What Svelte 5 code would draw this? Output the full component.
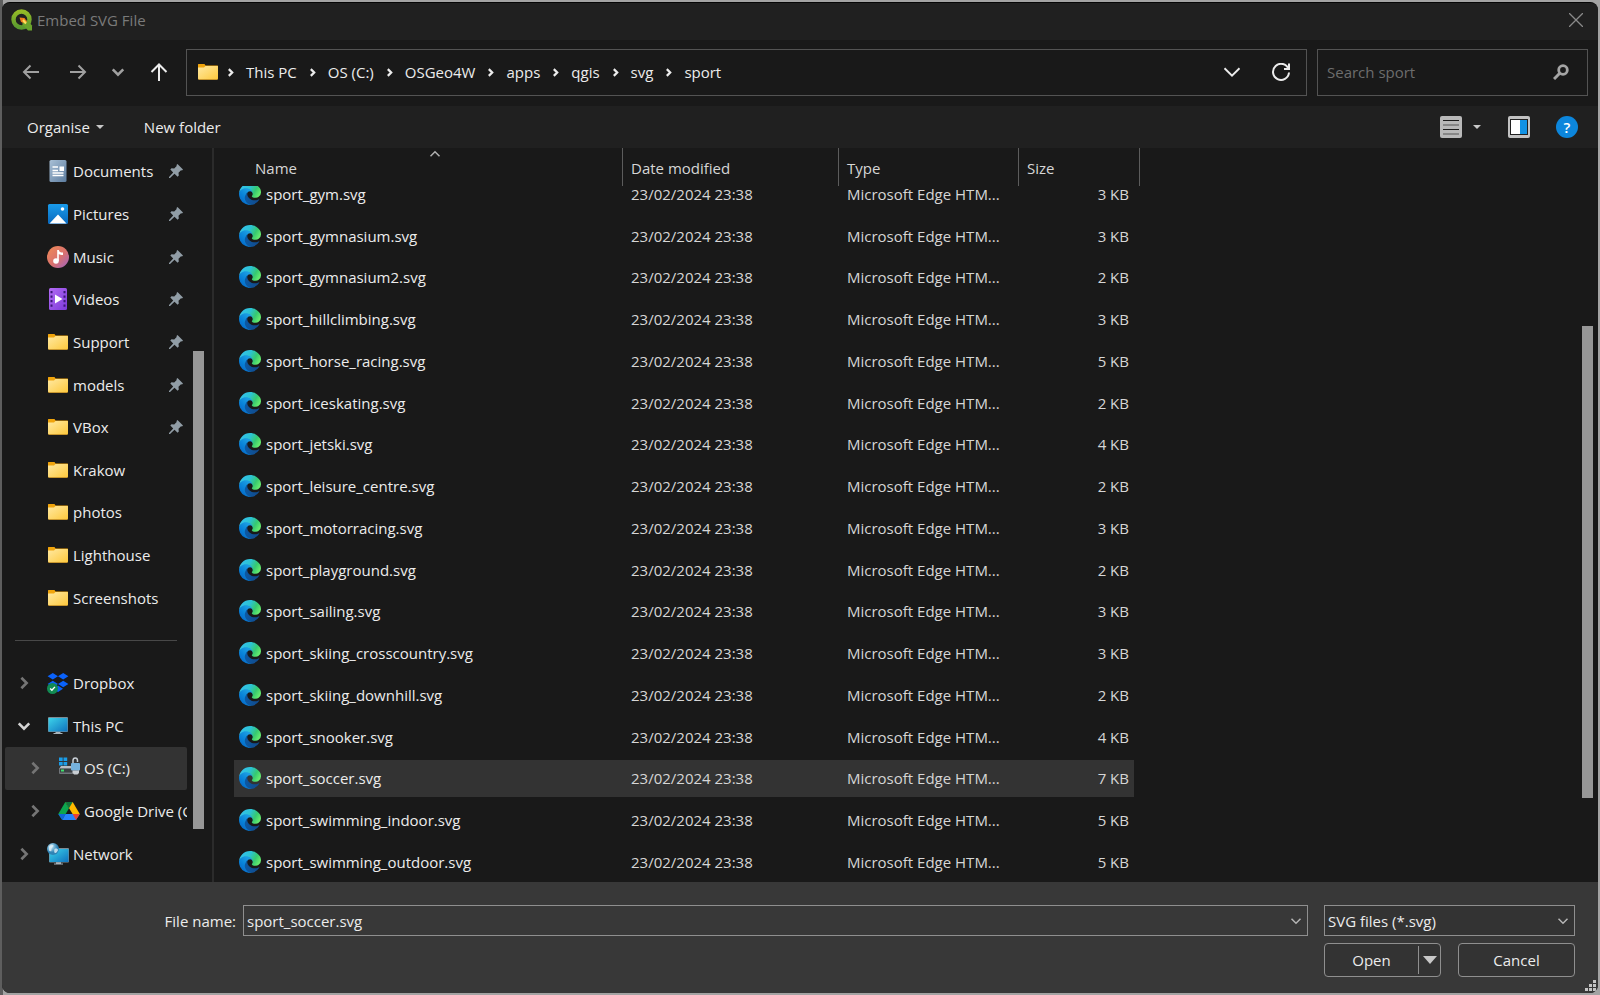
<script>
  import { onMount } from 'svelte';

  const crumbs = ['This PC', 'OS (C:)', 'OSGeo4W', 'apps', 'qgis', 'svg', 'sport'];

  const places = [
    { label: 'Documents', icon: 'documents', pinned: true },
    { label: 'Pictures', icon: 'pictures', pinned: true },
    { label: 'Music', icon: 'music', pinned: true },
    { label: 'Videos', icon: 'videos', pinned: true },
    { label: 'Support', icon: 'folder', pinned: true },
    { label: 'models', icon: 'folder', pinned: true },
    { label: 'VBox', icon: 'folder', pinned: true },
    { label: 'Krakow', icon: 'folder' },
    { label: 'photos', icon: 'folder' },
    { label: 'Lighthouse', icon: 'folder' },
    { label: 'Screenshots', icon: 'folder' },
    { divider: true },
    { label: 'Dropbox', icon: 'dropbox', tree: 'closed' },
    { label: 'This PC', icon: 'pc', tree: 'open' },
    { label: 'OS (C:)', icon: 'drive', tree: 'closed', nested: true, current: true },
    { label: 'Google Drive (G:)', icon: 'gdrive', tree: 'closed', nested: true },
    { label: 'Network', icon: 'network', tree: 'closed' }
  ];

  const files = [
    ['sport_gym.svg', 3],
    ['sport_gymnasium.svg', 3],
    ['sport_gymnasium2.svg', 2],
    ['sport_hillclimbing.svg', 3],
    ['sport_horse_racing.svg', 5],
    ['sport_iceskating.svg', 2],
    ['sport_jetski.svg', 4],
    ['sport_leisure_centre.svg', 2],
    ['sport_motorracing.svg', 3],
    ['sport_playground.svg', 2],
    ['sport_sailing.svg', 3],
    ['sport_skiing_crosscountry.svg', 3],
    ['sport_skiing_downhill.svg', 2],
    ['sport_snooker.svg', 4],
    ['sport_soccer.svg', 7],
    ['sport_swimming_indoor.svg', 5],
    ['sport_swimming_outdoor.svg', 5]
  ];

  let selected = $state('sport_soccer.svg');
  let search = $state('');
  let list;

  onMount(() => {
    list.scrollTop = 13;
  });
</script>

{#snippet chevron(dir, size)}
  <svg class="chev {dir}" width={size} height={size} viewBox="0 0 16 16" fill="none" stroke="currentColor" aria-hidden="true">
    <path d="M2 5l6 6 6-6" />
  </svg>
{/snippet}

{#snippet icon(name)}
  <svg class="icon" width="22" height="22" viewBox="0 0 22 22" aria-hidden="true">
    {#if name === 'folder'}
      <path d="M1 3.500Q1 3 1.500 3H7.500L8.500 4.500H20.500Q21 4.500 21 5V9H1z" fill="#f0a40c" />
      <path d="M1 6.500H7L8.500 5H20.500Q21 5 21 5.500V17.500Q21 18.500 20 18.500H2Q1 18.500 1 17.500z" fill="url(#g-folder)" />
      <path d="M1.500 18.500H20.500" stroke="#d9a02c" stroke-width=".8" />
    {:else if name === 'documents'}
      <rect x="2.500" y="0" width="17" height="22" rx="1.500" fill="url(#g-doc)" />
      <path d="M5.500 7H11M5.500 10.500H11M5.500 13H16.500M5.500 15.500H16.500" stroke="#fff" stroke-width="1.300" />
      <rect x="12.500" y="6.500" width="4.500" height="4.500" fill="#fff" />
    {:else if name === 'pictures'}
      <rect x="1" y="1" width="20" height="20" rx="1.500" fill="url(#g-pic)" />
      <path d="M2.500 20.500L11 11.500l8.500 9z" fill="#fff" />
      <circle cx="15.500" cy="6" r="1.800" fill="#fff" />
    {:else if name === 'music'}
      <circle cx="11" cy="11" r="11" fill="url(#g-music)" />
      <circle cx="9" cy="15" r="2.800" fill="#fff" />
      <path d="M10.200 15V4h1.600c.4 2 1.600 2.600 4.200 2.600V9c-1.700 0-3.200-.3-4.200-1v7z" fill="#fff" />
    {:else if name === 'videos'}
      <rect x="2" y="0" width="18" height="22" rx="1.500" fill="url(#g-video)" />
      <path d="M4.500 3V20M17.500 3V20" stroke="#3b1777" stroke-width="2" stroke-dasharray="2.200 2.300" />
      <path d="M8 6.500l7.500 4.500L8 15.500z" fill="#fff" />
    {:else if name === 'dropbox'}
      <path d="M5.800 1l5.200 3.300-5.200 3.300L.6 4.300zM16.200 1l5.200 3.300-5.200 3.300L11 4.300zM5.800 8.800L11 12l-5.200 3.300L.6 12zM16.200 8.800l5.200 3.200-5.200 3.300L11 12zM11 13.500l5 3.200-5 3.200-5-3.200z" fill="#0a62fb" />
      <circle cx="5.500" cy="16.500" r="5.500" fill="#128a53" />
      <path d="M3.200 16.600l1.700 1.700 3-3.400" fill="none" stroke="#fff" stroke-width="1.400" />
    {:else if name === 'pc'}
      <path d="M8.500 16h5v2h2v1h-9v-1h2z" fill="#a9b4bb" />
      <rect x="1" y="2" width="20" height="15" rx="1" fill="#7d8b94" />
      <rect x="1.500" y="3" width="19" height="13.500" fill="url(#g-screen)" />
    {:else if name === 'network'}
      <path d="M9 19h5v1.500h2v1H7v-1h2z" fill="#a9b4bb" />
      <rect x="2" y="5" width="20" height="14.500" rx="1" fill="#7d8b94" />
      <rect x="2.500" y="6" width="19" height="13" fill="url(#g-screen)" />
      <circle cx="6" cy="6" r="6" fill="url(#g-globe)" />
      <path d="M2 3.500c2-2.500 4-2 4.500-1S4 5 4.500 6.500 3 9 2 7.500zM7.500 6c2-1 3.500 0 3.500 1s-2 3.500-3 3S7 8 7.500 6z" fill="#e2f1f8" opacity=".8" />
    {:else if name === 'drive'}
      <path d="M1 .5h3.700v3.600H1zM5.500 .5h3.700v3.600H5.500zM1 5h3.700v3.600H1zM5.500 5h3.700v3.600H5.500z" fill="#1b9de8" />
      <path d="M3 9h17l1 3v3H1v-3z" fill="#b9bdc1" />
      <rect x="1" y="11" width="20" height="6" rx="1" fill="#70757a" />
      <rect x="2" y="12" width="18" height="3.500" fill="#3c4043" />
      <rect x="3" y="12.500" width="3" height="2" fill="#3fe26c" />
      <path d="M15 7V3.500c0-3.500 4.500-3.500 4.500 0V5" fill="none" stroke="#c7ced4" stroke-width="1.500" />
      <rect x="13" y="6" width="9" height="7.500" rx="1" fill="#76b2dd" />
      <path d="M14.500 13.500h6.500v2l-1.500 2h-3.500l-1.500-2z" fill="#c9ced3" />
    {:else if name === 'gdrive'}
      <path d="M7.300 2h7.400L21.800 14h-7.200z" fill="#ffba00" />
      <path d="M7.300 2L11 8.200 4.200 20 .3 14z" fill="#0da64e" />
      <path d="M7.500 14H21.800L18 20H4.200z" fill="#2684fc" />
      <path d="M7.300 2h7.400L11 8.200z" fill="#12753b" />
      <path d="M14.600 14h7.200L18 20z" fill="#ea4335" />
      <path d="M7.600 14L4.200 20 .3 14z" fill="#1066da" />
    {/if}
  </svg>
{/snippet}

<svg class="defs" width="0" height="0" aria-hidden="true">
  <defs>
    <linearGradient id="g-folder" x2="1" y2="1"><stop stop-color="#ffe9a2" /><stop offset="1" stop-color="#fdc83c" /></linearGradient>
    <linearGradient id="g-doc" x2="1" y2="1"><stop stop-color="#a9c0d6" /><stop offset="1" stop-color="#5c7c9f" /></linearGradient>
    <linearGradient id="g-pic" x2="0" y2="1"><stop stop-color="#199bea" /><stop offset="1" stop-color="#0868bd" /></linearGradient>
    <linearGradient id="g-music" x2="1" y2="1"><stop stop-color="#f18b54" /><stop offset=".55" stop-color="#d9716f" /><stop offset="1" stop-color="#9d62c4" /></linearGradient>
    <linearGradient id="g-video" x2="1" y2="1"><stop stop-color="#b36bf5" /><stop offset="1" stop-color="#7c3ad8" /></linearGradient>
    <linearGradient id="g-screen" x2="1" y2="1"><stop stop-color="#3cd3ea" /><stop offset="1" stop-color="#0f72be" /></linearGradient>
    <radialGradient id="g-globe" cx=".35" cy=".3"><stop stop-color="#c9ecfa" /><stop offset="1" stop-color="#2f83b5" /></radialGradient>
    <linearGradient id="e1" x1="0" y1=".5" x2="1" y2=".5"><stop stop-color="#0c59a4" /><stop offset="1" stop-color="#114a8b" /></linearGradient>
    <linearGradient id="e2" x1=".8" y1=".3" x2=".3" y2="1"><stop stop-color="#1b9de2" /><stop offset=".5" stop-color="#0883d9" /><stop offset="1" stop-color="#0669c8" /></linearGradient>
    <linearGradient id="e3" x1="0" y1=".2" x2="1" y2=".6"><stop stop-color="#35c1f1" /><stop offset=".45" stop-color="#2cc3d2" /><stop offset=".75" stop-color="#36c970" /><stop offset="1" stop-color="#66eb6e" /></linearGradient>
    <linearGradient id="g-q" x2="0" y2="1"><stop stop-color="#93b927" /><stop offset="1" stop-color="#5a9a2f" /></linearGradient>
    <symbol id="edge" viewBox="0 0 256 256">
      <g transform="translate(-4.630 -4.920)">
        <path fill="url(#e1)" d="M235.680 195.460a93.730 93.730 0 01-10.540 4.710 101.870 101.870 0 01-35.900 6.460c-47.320 0-88.540-32.550-88.540-74.320A31.480 31.480 0 01117.130 105c-42.800 1.800-53.800 46.400-53.800 72.530 0 73.880 68.090 81.370 82.760 81.370 7.910 0 19.840-2.300 27-4.560l1.310-.44a128.340 128.340 0 0066.600-52.800 4 4 0 00-5.320-5.640z" />
        <path fill="url(#e2)" d="M110.340 246.340A79.200 79.200 0 0187.600 225a80.720 80.720 0 0129.530-120c3.120-1.470 8.450-4.130 15.540-4a32.350 32.350 0 0125.690 13 31.880 31.880 0 016.360 18.660c0-.21 24.460-79.600-80-79.600-43.900 0-80 41.660-80 78.210a130.150 130.150 0 0012.110 56 128 128 0 00156.380 67.110 75.550 75.550 0 01-62.780-8z" />
        <path fill="url(#e3)" d="M156.940 153.780c-.81 1.050-3.300 2.500-3.300 5.660 0 2.610 1.700 5.120 4.720 7.230 14.380 10 41.490 8.680 41.560 8.680a59.560 59.560 0 0030.270-8.350 61.380 61.380 0 0030.430-52.880c.26-22.410-8-37.310-11.340-43.910C228.090 28.760 182.350 4.920 132.610 4.920a128 128 0 00-128 126.200c.48-36.540 36.800-66.050 80-66.050 3.500 0 23.460.34 42 10.070 16.340 8.580 24.900 18.940 30.850 29.210 6.180 10.670 7.280 24.150 7.280 29.520s-2.740 13.330-7.800 19.910z" />
      </g>
    </symbol>
  </defs>
</svg>

<div class="dialog" role="dialog" aria-labelledby="title">
  <header class="titlebar">
    <svg width="22" height="22" viewBox="0 0 22 22" aria-hidden="true">
      <circle cx="10.500" cy="10.500" r="8" fill="none" stroke="url(#g-q)" stroke-width="4.400" />
      <path d="M11.500 11.500h5l4.500 5v5h-4l-5.500-6z" fill="#6aa42c" />
      <path d="M8.500 8.500l5 .5 2.500 3.500-2 2-4-1.500z" fill="#ef7d1a" />
      <path d="M12 11l3 3.500" stroke="#fbe25c" stroke-width="2" />
    </svg>
    <h1 id="title">Embed SVG File</h1>
    <button class="close" aria-label="Close">
      <svg width="14" height="14" viewBox="0 0 14 14" stroke="currentColor" stroke-width="1.300" aria-hidden="true"><path d="M0 0l14 14M14 0L0 14" /></svg>
    </button>
  </header>

  <nav class="navbar" aria-label="Location">
    <div class="history">
      <button class="dim" aria-label="Back">
        <svg width="18" height="18" viewBox="0 0 18 18" aria-hidden="true"><path d="M17 9H2M8.500 2.500L2 9l6.500 6.500" /></svg>
      </button>
      <button class="dim" aria-label="Forward">
        <svg width="18" height="18" viewBox="0 0 18 18" aria-hidden="true"><path d="M1 9h15M9.500 2.500L16 9l-6.500 6.500" /></svg>
      </button>
      <button class="dim" aria-label="Recent locations">{@render chevron('down', 14)}</button>
      <button aria-label="Up">
        <svg width="18" height="18" viewBox="0 0 18 18" aria-hidden="true"><path d="M9 18V2M1.500 9L9 1.500 16.500 9" /></svg>
      </button>
    </div>

    <div class="address">
      {@render icon('folder')}
      <ol>
        {#each crumbs as crumb}
          <li>{@render chevron('right', 9)}<a href="#{crumb}">{crumb}</a></li>
        {/each}
      </ol>
      <button aria-label="Previous locations">{@render chevron('down', 20)}</button>
      <button aria-label="Refresh">
        <svg width="18" height="18" viewBox="0 0 18 18" aria-hidden="true"><path d="M16.500 6A8 8 0 1 0 17 9.500M17 .500V6h-5" /></svg>
      </button>
    </div>

    <div class="search">
      <input type="text" placeholder="Search sport" aria-label="Search sport" bind:value={search} />
      <svg width="16" height="16" viewBox="0 0 16 16" fill="none" stroke="#a5a5a5" aria-hidden="true">
        <circle cx="10" cy="6" r="4.300" stroke-width="2.800" /><path d="M7 9l-6 6" stroke-width="3" />
      </svg>
    </div>
  </nav>

  <div class="toolbar">
    <button>Organise <span class="caret"></span></button>
    <button>New folder</button>
    <div class="views">
      <button aria-label="Change your view">
        <svg width="22" height="22" viewBox="0 0 22 22" aria-hidden="true">
          <rect width="22" height="22" rx="2" fill="#b9b9b9" />
          <path d="M3 4.500h16M3 13.500h16" stroke="#1c1c1c" /><path d="M3 9h16M3 18h16" stroke="#777" stroke-width="1.300" />
        </svg>
      </button>
      <button class="more" aria-label="More view options"><span class="caret"></span></button>
      <button aria-label="Show the preview pane">
        <svg width="22" height="22" viewBox="0 0 22 22" aria-hidden="true">
          <rect width="22" height="22" rx="2" fill="#c2c2c2" />
          <rect x="2" y="3" width="18" height="16" fill="#202020" />
          <rect x="3" y="4" width="9" height="14" fill="#fff" /><rect x="12" y="4" width="7" height="14" fill="#1192e4" />
        </svg>
      </button>
      <button class="help" aria-label="Get help">?</button>
    </div>
  </div>

  <div class="body">
    <aside>
      <ul class="places">
        {#each places as place}
          {#if place.divider}
            <li class="divider"></li>
          {:else}
            <li class:nested={place.nested} class:current={place.current}>
              <span class="twist" class:open={place.tree === 'open'}>
                {#if place.tree}{@render chevron(place.tree === 'open' ? 'down' : 'right', 14)}{/if}
              </span>
              {@render icon(place.icon)}
              <a href="#{place.label}">{place.label}</a>
              {#if place.pinned}
                <svg class="pin" width="14" height="14" viewBox="0 0 14 14" aria-hidden="true">
                  <path d="M8.500 0L14 5.500l-1 1-1-.2-2.500 2.500.3 2.700-1.200 1.200L5.500 9.800 1 14H0v-1l4.200-4.500L1.300 5.500 2.500 4.300l2.700.3L7.700 2.100 7.500 1z" fill="#919da6" />
                </svg>
              {/if}
            </li>
          {/if}
        {/each}
      </ul>
      <div class="thumb"></div>
    </aside>

    <main>
      <div class="list" bind:this={list}>
        <table>
          <colgroup>
            <col class="c-name" /><col class="c-date" /><col class="c-type" /><col class="c-size" />
          </colgroup>
          <thead>
            <tr>
              <th><span class="sort">{@render chevron('up', 12)}</span>Name</th>
              <th>Date modified</th>
              <th>Type</th>
              <th>Size</th>
            </tr>
          </thead>
          <tbody>
            {#each files as [name, size] (name)}
              <tr class:selected={name === selected} onclick={() => (selected = name)}>
                <td>
                  <div class="file">
                    <svg width="22" height="22" aria-hidden="true"><use href="#edge" /></svg>
                    {name}
                  </div>
                </td>
                <td>23/02/2024 23:38</td>
                <td>Microsoft Edge HTM...</td>
                <td>{size} KB</td>
              </tr>
            {/each}
          </tbody>
        </table>
      </div>
      <div class="thumb"></div>
    </main>
  </div>

  <footer>
    <label for="filename">File name:</label>
    <div class="combo name">
      <input id="filename" type="text" bind:value={selected} />
      {@render chevron('down', 12)}
    </div>
    <div class="combo filter">
      <select aria-label="File type">
        <option>SVG files (*.svg)</option>
      </select>
      {@render chevron('down', 12)}
    </div>
    <div class="actions">
      <div class="split">
        <button>Open</button>
        <button class="drop" aria-label="Open options"><span class="caret"></span></button>
      </div>
      <button class="cancel">Cancel</button>
    </div>
    <svg class="grip" width="12" height="12" viewBox="0 0 12 12" fill="#c4c4c4" aria-hidden="true">
      <path d="M8 0h3v3H8zM4 4h3v3H4zM8 4h3v3H8zM0 8h3v3H0zM4 8h3v3H4zM8 8h3v3H8z" />
    </svg>
  </footer>
</div>

<style>
  :global(body) {
    background: linear-gradient(to right, #5e5e5e 3px, #a3a3a3 3px);
  }

  .dialog, .dialog * { box-sizing: border-box; }

  .dialog {
    display: flex;
    flex-direction: column;
    height: calc(100vh - 4px);
    margin: 2px;
    border-top: 1px solid #050505;
    border-radius: 8px;
    overflow: hidden;
    position: relative;
    background: #191919;
    color: #ececec;
    font: 15px/20px "Segoe UI", "Open Sans", "Noto Sans", sans-serif;
  }

  .defs { position: absolute; }

  button, input, select {
    font: inherit;
    color: inherit;
    background: none;
    border: 0;
    padding: 0;
    margin: 0;
  }

  button { display: flex; align-items: center; justify-content: center; }
  a { color: inherit; text-decoration: none; }
  ol, ul { list-style: none; margin: 0; padding: 0; }
  svg { flex: none; display: block; }

  .chev { stroke-width: 2; }
  .chev.right { transform: rotate(-90deg); }
  .chev.up { transform: rotate(180deg); }

  .caret {
    border: 4px solid transparent;
    border-top: 4px solid #c8c8c8;
    border-bottom: 0;
  }

  /* Title bar */
  .titlebar {
    display: flex;
    align-items: center;
    gap: 4px;
    height: 37px;
    padding: 0 15px 4px 9px;
    background: #202020;
    color: #7a7a7a;
  }

  h1 { margin: 0; font-size: 15px; font-weight: 400; }
  .close { margin-left: auto; color: #8a8a8a; }

  /* Navigation */
  .navbar {
    display: flex;
    align-items: center;
    height: 66px;
    padding: 0 10px 2px 0;
  }

  .history {
    display: flex;
    align-items: center;
    justify-content: space-between;
    width: 184px;
    padding: 0 18px 0 20px;
  }

  .history svg, .address button svg {
    fill: none;
    stroke: currentColor;
    stroke-width: 2;
  }

  .history .dim { color: #a0a0a0; }
  .history .dim:nth-child(2) { margin-left: 4px; }
  .history .dim .chev { stroke-width: 3; }

  .address, .search {
    display: flex;
    align-items: center;
    height: 47px;
    border: 1px solid #535353;
  }

  .address { flex: 1; padding: 0 16px 0 10px; gap: 7px; }
  .address ol { display: flex; flex: 1; gap: 11px; }
  .address li { display: flex; align-items: center; gap: 11px; }
  .address li .chev { stroke-width: 4; }
  .address button .chev { stroke-width: 1.500; }
  .address button + button { margin-left: 23px; }

  .search { width: 271px; margin-left: 10px; padding: 0 18px 0 9px; }
  .search input { flex: 1; min-width: 0; outline: 0; }
  .search input::placeholder { color: #6d6d6d; opacity: 1; }

  /* Command bar */
  .toolbar {
    display: flex;
    align-items: center;
    gap: 40px;
    height: 42px;
    padding: 0 20px 0 25px;
    background: #202020;
  }

  .toolbar .caret { margin-left: 6px; }
  .views { display: flex; align-items: center; margin-left: auto; }
  .views .more { margin: 0 27px 0 5px; }

  .help {
    width: 22px;
    height: 22px;
    margin-left: 26px;
    border-radius: 50%;
    background: #0c86dc;
    color: #fff;
    font-weight: 600;
  }

  /* Panes */
  .body { display: flex; flex: 1; min-height: 0; }

  aside {
    position: relative;
    width: 212px;
    border-right: 2px solid #2b2b2b;
  }

  .places {
    display: grid;
    grid-auto-rows: 1fr;
    height: 100%;
    width: 182px;
    margin-left: 3px;
    padding: 2px 0 7px;
  }

  .places li {
    display: flex;
    align-items: center;
    min-width: 0;
    padding: 0 4px 0 12px;
    overflow: hidden;
    white-space: nowrap;
  }

  .places li.nested { padding: 0 0 0 23px; }
  .places li.current { background: #333; border-radius: 2px; }
  .places li.divider::before { content: ""; flex: 1; height: 1px; margin-left: -2px; margin-right: 6px; background: #484848; }
  .places a { margin-left: 4px; }
  .places .pin { margin-left: auto; }
  .twist { flex: none; width: 30px; color: #757575; }
  .twist.open { color: #d4d4d4; }
  .twist .chev { stroke-width: 3; }

  .thumb { position: absolute; width: 11px; background: #979797; }
  aside .thumb { top: 203px; bottom: 53px; right: 8px; }
  main .thumb { top: 178px; bottom: 84px; right: 5px; }

  main { position: relative; flex: 1; min-width: 0; padding-left: 20px; }
  .list { height: 100%; overflow: hidden; }

  table {
    width: 906px;
    height: calc(100% + 14px);
    table-layout: fixed;
    border-spacing: 0;
    color: #d6d6d6;
  }

  .c-name { width: 389px; }
  .c-date { width: 216px; }
  .c-type { width: 180px; }

  th {
    position: sticky;
    top: 0;
    z-index: 1;
    height: 38px;
    padding: 2px 8px 0;
    background: #191919;
    border-right: 1px solid #5c5c5c;
    font-weight: 400;
    text-align: left;
  }

  th:first-child { padding-left: 21px; }
  .sort { position: absolute; top: 0; left: 195px; color: #b0b0b0; }
  .sort .chev { stroke-width: 2; }

  td { padding: 0 8px; white-space: nowrap; }
  td:first-child { padding-left: 5px; color: #ececec; }
  td:last-child { padding-right: 11px; text-align: right; }
  .file { display: flex; align-items: center; gap: 5px; }

  .selected td { background: linear-gradient(#333, #333) left center / 100% 37px no-repeat; }
  .selected td:last-child { background-size: calc(100% - 6px) 37px; }

  /* Footer */
  footer {
    display: grid;
    grid-template-columns: 234px 1fr 251px;
    align-items: center;
    column-gap: 7px;
    row-gap: 7px;
    height: 111px;
    padding: 23px 23px 16px 0;
    background: #383838;
  }

  footer label { text-align: right; }

  .combo { position: relative; height: 31px; border: 1px solid #8f8f8f; }
  .combo.name { margin-right: 9px; }
  .combo.filter { background: #333; }
  .combo input, .combo select { width: 100%; height: 100%; padding: 0 28px 0 3px; outline: 0; appearance: none; }
  .combo option { background: #383838; }
  .combo .chev { position: absolute; right: 5px; top: 9px; pointer-events: none; color: #b5b5b5; }

  .actions { grid-column: 3; display: flex; gap: 17px; }

  .split, .cancel {
    flex: 1;
    height: 34px;
    border: 1px solid #8f8f8f;
    border-radius: 4px;
    background: #333;
  }

  .split { display: flex; align-items: center; }
  .split button { flex: 1; height: 28px; }
  .split .drop { flex: none; width: 22px; border-left: 1px solid #8f8f8f; }
  .drop .caret { border-width: 8px 7px 0; }

  .grip { position: absolute; right: 1px; bottom: 1px; }
</style>
